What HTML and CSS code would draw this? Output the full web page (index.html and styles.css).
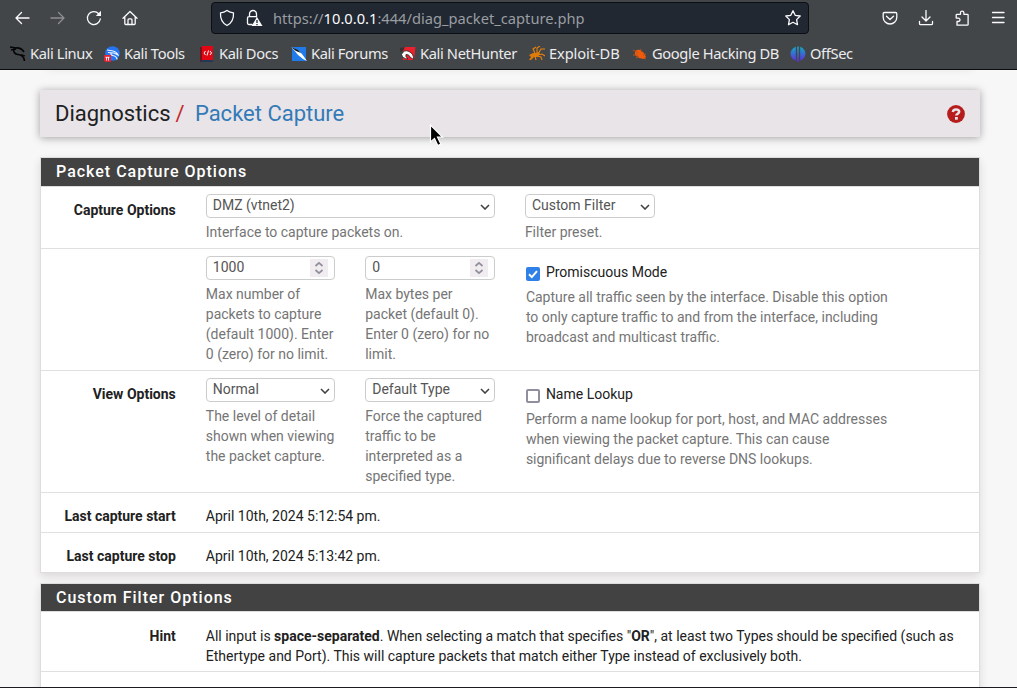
FILE: index.html
```html
<!DOCTYPE html>
<html lang="en">
<head>
<meta charset="utf-8">
<title>Diagnostics: Packet Capture</title>
<link rel="stylesheet" href="styles.css">
</head>
<body>
<svg class="defs" width="0" height="0">
  <symbol id="chev" viewBox="0 0 10 6"><path d="M1 1l4 4 4-4" fill="none" stroke="#444" stroke-width="1.6"/></symbol>
  <symbol id="spin" viewBox="0 0 18 18"><path d="M5.500 7L9 3.800 12.500 7M5.500 11L9 14.200 12.500 11" fill="none" stroke="#8f8f9d" stroke-width="1.700"/></symbol>
</svg>
<header class="browser">
  <div class="toolbar">
    <nav class="nav">
      <svg width="16" height="16" viewBox="0 0 16 16"><path d="M15 8H2M7.500 2.500L2 8l5.500 5.500"/></svg>
      <svg class="dim" width="16" height="16" viewBox="0 0 16 16"><path d="M1 8h13M8.500 2.500L14 8l-5.500 5.500"/></svg>
      <svg width="16" height="16" viewBox="0 0 16 16"><path d="M14.300 9A6.500 6.500 0 1 1 12.700 3.700"/><path class="fill" d="M15 .8V6H9.800z"/></svg>
      <svg width="16" height="16" viewBox="0 0 16 16"><path d="M1 8.200L8 1.500l7 6.700M2.800 7v6.500q0 1 1 1h8.400q1 0 1-1V7M6 14.300V10q0-1.200 1-1.200h2q1 0 1 1.200v4.300"/></svg>
    </nav>
    <div class="address">
      <svg width="16" height="18" viewBox="0 0 16 18"><path d="M8 1.500Q11 3.700 14.500 3.900C14.800 9 13 14 8 16.500 3 14 1.200 9 1.500 3.900Q5 3.700 8 1.500z"/></svg>
      <svg class="lock" width="17" height="18" viewBox="0 0 17 18"><path d="M3.500 7.500V5a3.500 3.500 0 0 1 7 0v3M6 15.500H3q-1.500 0-1.500-1.500V9Q1.500 7.700 3 7.700h7"/><path class="fill" d="M11 8l5.500 9h-11z"/><path d="M11 11v3M11 15v1.200" class="mark"/></svg>
      <span class="url">https://<b>10.0.0.1</b>:444/diag_packet_capture.php</span>
      <svg class="star" width="18" height="18" viewBox="0 0 18 18"><path d="M9 1.700l2.200 4.600 5 .7-3.600 3.600.9 5.100L9 13.300l-4.500 2.400.9-5.100L1.800 7l5-.7z"/></svg>
    </div>
    <div class="tools">
      <svg width="16" height="16" viewBox="0 0 16 16"><path d="M2.500 2.500h11q1.300 0 1.300 1.300v3.400a6.800 6.800 0 0 1-13.600 0V3.800q0-1.300 1.300-1.300zM4.500 6.200L8 9.500l3.500-3.300"/></svg>
      <svg width="16" height="16" viewBox="0 0 16 16"><path d="M8 .5v10M4 7l4 4 4-4M1.500 11.500v2q0 1.200 1.200 1.200h10.600q1.200 0 1.200-1.200v-2"/></svg>
      <svg width="16" height="16" viewBox="0 0 16 16"><path d="M3 15.200V11.500h1.300a1.700 1.700 0 0 0 0-3.400H2.200V5q0-.7.800-.7h3.500V2.800a1.700 1.700 0 0 1 3.400 0v1.500h3.400q.8 0 .8.800v9.300q0 .8-.8.800z"/></svg>
      <svg width="16" height="16" viewBox="0 0 16 16"><path d="M2.500 2.500h11.500M2.500 7.500h11.500M2.500 12.500h11.500"/></svg>
    </div>
  </div>
  <div class="bookmarks">
    <a><svg viewBox="0 0 16 16"><path d="M0 1l6 1q5-.5 8 4M1 4l5-1M4 2.500Q3 8 8 8.500q6 .5 6.500 6.500" fill="none" stroke="#050506" stroke-width="1.700"/><path d="M11 8.500l4 1.500" stroke="#050506" stroke-width="1.200"/></svg><span>Kali Linux</span></a>
    <a><svg viewBox="0 0 16 16"><circle cx="8.500" cy="7.500" r="7.300" fill="#2675f0"/><path d="M3 4l6 1q4 1 5 4l-4-2-6-.5M7 7q-.5 2 2 2.500 4 1 4 4" fill="none" stroke="#eaf2ff" stroke-width="1.200"/><path d="M0 9h7v7H1.500L0 14.500z" fill="#e02437"/><path d="M1.500 11.300h4M2.500 11v3.500M4.500 11v3.500" stroke="#fff" stroke-width=".9"/></svg><span>Kali Tools</span></a>
    <a><svg viewBox="0 0 16 16"><path d="M1 1h3v15H1z" fill="#7a1018"/><path d="M3 0h11v14H3z" fill="#e30613"/><path d="M2 14h12v2H2z" fill="#213957"/><path d="M6.500 5L5 7l1.500 2M11 5l1.500 2L11 9M9.500 4.500l-1.500 5" fill="none" stroke="#fff"/></svg><span>Kali Docs</span></a>
    <a><svg viewBox="0 0 16 16"><path d="M1 1h14v14H1z" fill="#1f7bea"/><path d="M0 1l8 4 3 3 5 7-4-2-5-4-4-5z" fill="#fff"/><path d="M0 1l7 3 3 3-5-2z" fill="#111"/></svg><span>Kali Forums</span></a>
    <a><svg viewBox="0 0 16 16"><path d="M3 1h12.500L14 14H3z" fill="#eb202d"/><path d="M0 2l5-1-2 4-3 1z" fill="#333"/><path d="M1.500 8.500Q4 3 9 5.500q5 2.500 4.500 8L10 11q-1-3-4-2.500-1 2 2 4.500-5 0-6.500-4.500z" fill="#fff" stroke="#222" stroke-width=".8"/></svg><span>Kali NetHunter</span></a>
    <a class="edb"><svg viewBox="0 0 16 16"><path d="M0 9l4-2 3 0 3-1 1 2-3 3-3 0-3 3H0l2-3z" fill="#dc7a0a"/><path d="M6 7L4 3l3-2M8 7l0-5 3-2M9 8l3-5 4 0M9 9l4-1 3 2M8 10l4 1 1 3M6 10l1 4" fill="none" stroke="#e98207" stroke-width="1.100"/></svg><span>Exploit-DB</span></a>
    <a><svg viewBox="0 0 16 16"><path d="M3 5q3-2 5-1l4 3 2 4-2 2-5-1-4-3z" fill="#f05a0a"/><path d="M1 4l5 3M1 9h5M4 12l3-2M8 3l2 3M14 8l-3 1M12 12l2 1" stroke="#b8521b" fill="none"/></svg><span>Google Hacking DB</span></a>
    <a><svg viewBox="0 0 16 16"><defs><linearGradient id="os" x2="0" y2="1"><stop stop-color="#12abc5"/><stop offset="1" stop-color="#6127e1"/></linearGradient></defs><path d="M5.800.8v13.800C-1.200 12-1.200 3.500 5.800.8zM7.200.5h1.600V16H7.200zM10.200.8v13.800c7-2.600 7-11.100 0-13.800z" fill="url(#os)"/></svg><span>OffSec</span></a>
  </div>
</header>
<main class="page">
  <div class="prev"></div>
  <div class="crumbs">
    <h1>Diagnostics <i>/</i> <a>Packet Capture</a></h1>
    <svg width="18" height="18" viewBox="0 0 18 18"><circle cx="9" cy="9" r="8.900" fill="#b71c1c"/><path d="M5.800 6.900Q6.300 4.500 9 4.500c2.200 0 3.200 1 3.200 2.300 0 2-2.900 1.800-2.900 3.800" fill="none" stroke="#e8e4e8" stroke-width="2.500"/><path d="M8 12h2.800v2.700H8z" fill="#e8e4e8"/></svg>
  </div>
  <section class="panel">
    <h2>Packet Capture Options</h2>
    <div class="row r1">
      <label>Capture Options</label>
      <div class="wide"><div class="field">DMZ (vtnet2)<svg class="chev"><use href="#chev"/></svg></div><p>Interface to capture packets on.</p></div>
      <div><div class="field">Custom Filter<svg class="chev"><use href="#chev"/></svg></div><p>Filter preset.</p></div>
    </div>
    <div class="row r2">
      <label></label>
      <div><div class="field">1000<svg class="spin"><use href="#spin"/></svg></div><p>Max number of<br>packets to capture<br>(default 1000). Enter<br>0 (zero) for no limit.</p></div>
      <div><div class="field">0<svg class="spin"><use href="#spin"/></svg></div><p>Max bytes per<br>packet (default 0).<br>Enter 0 (zero) for no<br>limit.</p></div>
      <div class="check"><div class="option"><span class="box on"><svg width="14" height="14" viewBox="0 0 14 14"><path d="M3 7.300l2.800 2.800L11 4.200" fill="none" stroke="#fff" stroke-width="2"/></svg></span><span>Promiscuous Mode</span></div><p>Capture all traffic seen by the interface. Disable this option<br>to only capture traffic to and from the interface, including<br>broadcast and multicast traffic.</p></div>
    </div>
    <div class="row r2">
      <label>View Options</label>
      <div><div class="field">Normal<svg class="chev"><use href="#chev"/></svg></div><p>The level of detail<br>shown when viewing<br>the packet capture.</p></div>
      <div><div class="field">Default Type<svg class="chev"><use href="#chev"/></svg></div><p>Force the captured<br>traffic to be<br>interpreted as a<br>specified type.</p></div>
      <div class="check"><div class="option"><span class="box"></span><span>Name Lookup</span></div><p>Perform a name lookup for port, host, and MAC addresses<br>when viewing the packet capture. This can cause<br>significant delays due to reverse DNS lookups.</p></div>
    </div>
    <div class="row r3"><label>Last capture start</label><div class="full">April 10th, 2024 5:12:54 pm.</div></div>
    <div class="row r3 last"><label>Last capture stop</label><div class="full">April 10th, 2024 5:13:42 pm.</div></div>
  </section>
  <section class="panel second">
    <h2>Custom Filter Options</h2>
    <div class="row r4"><label>Hint</label><div class="full">All input is <b>space-separated</b>. When selecting a match that specifies "<b>OR</b>", at least two Types should be specified (such as<br>Ethertype and Port). This will capture packets that match either Type instead of exclusively both.</div></div>
    <div class="row rest"></div>
  </section>
</main>
<svg class="cursor" width="16" height="24" viewBox="0 0 16 24"><path d="M1.500 1v17l4-3.600 3.300 7.100 3-1.400-3.300-6.900h5z" fill="#000" stroke="#fff" stroke-width="1.200"/></svg>
</body>
</html>
```

FILE: styles.css
```css
* { box-sizing: border-box; }
body { margin: 0; width: 1017px; height: 688px; overflow: hidden; display: flex; flex-direction: column; position: relative; background: #f7f7f7; color: #212121; font: 14px/20px Roboto, sans-serif; border-bottom: 1px solid #1c1b22; }
h1, h2, p { margin: 0; font-weight: 400; }
svg { flex: none; }
.defs { position: absolute; }

.browser { flex: none; height: 70px; background: #434649; border-bottom: 1px solid #0c0c0d; font-family: "Noto Sans", sans-serif; color: #ececee; }
.toolbar { height: 36px; display: flex; align-items: center; }
.toolbar svg { fill: none; stroke: #fbfbfe; stroke-width: 1.3; stroke-linejoin: round; stroke-linecap: round; }
.toolbar svg .fill { fill: #fbfbfe; stroke: none; }
.toolbar svg .mark { stroke: #20262f; stroke-linecap: butt; }
.toolbar svg.dim { opacity: .4; }
.nav { width: 210px; padding-left: 14px; display: flex; gap: 20px; }
.address { width: 598px; height: 32px; padding: 0 6px 0 7px; display: flex; align-items: center; background: #212832; border: 1px solid #0b0e13; border-radius: 4px; margin-left: 1px; }
.lock { margin-left: 11px; }
.url { margin-left: 10px; font-size: 14.67px; letter-spacing: .01px; color: #9a9da1; white-space: nowrap; }
.url b { font-weight: 400; color: #fbfbfe; }
.star { margin-left: auto; }
.tools { margin-left: 73px; display: flex; gap: 20px; }
.bookmarks { height: 33px; padding-left: 10px; display: grid; grid-template-columns: 94px 95px 92px 109px 129px 103px 158px 90px; align-items: center; }
.bookmarks a { display: flex; align-items: center; gap: 4px; font-size: 14.67px; letter-spacing: -.36px; white-space: nowrap; }
.bookmarks .edb { letter-spacing: -.1px; }
.bookmarks svg { width: 16px; height: 16px; margin-top: 2px; }

.page { flex: 1; padding: 0 37px 0 40px; clip-path: inset(0); }
.prev { height: 0; margin: 0 8px; width: 924px; box-shadow: 0 0 5px 1px rgba(120,90,110,.12); }
.crumbs { width: 940px; height: 47px; margin-top: 20px; padding: 0 15px; display: flex; align-items: center; justify-content: space-between; background: #e8e4e8; box-shadow: 0 1px 8px rgba(0,0,0,.35); }
.crumbs h1 { font-size: 22px; line-height: 26px; white-space: pre; }
.crumbs i { font-style: normal; color: #c62828; margin-left: -.5px; }
.crumbs a { color: #337ab7; margin-left: 4.8px; }

.panel { width: 940px; margin-top: 20px; background: #fff; border: 1px solid #ddd; box-shadow: 0 4px 8px rgba(70,40,50,.14); }
.panel h2 { height: 29px; padding-left: 15px; background: #424242; color: #fff; border-bottom: 1px solid #ddd; font-size: 16px; font-weight: 500; line-height: 27px; letter-spacing: 1px; }
.row { display: grid; grid-template-columns: 134.800px 129.400px 129.700px 363px; column-gap: 30px; padding-top: 7px; border-bottom: 1px solid #e2dfe2; }
.row:last-child { border-bottom: 0; }
.row label { text-align: right; font-weight: 700; padding-top: 6px; }
.r1 { height: 62px; }
.r1 .wide { grid-column: 2 / 4; }
.r1 > div:last-child { width: 130px; }
.r2 { height: 122px; }
.r3 { height: 40px; padding-top: 13px; }
.last { height: 39px; }
.r4 { height: 60px; padding-top: 14px; }
.r3 label, .r4 label { padding-top: 0; }
.full { grid-column: 2 / 5; white-space: nowrap; }
.row p { color: #757575; white-space: nowrap; margin-top: 4px; }
.field { height: 24px; padding: 0 4px 2px 6px; display: flex; align-items: center; justify-content: space-between; line-height: 20px; color: #555; border: 1px solid #ccc; border-radius: 4px; background: #fff; }
.chev { width: 10px; height: 6px; margin-top: 3px; }
.spin { width: 18px; height: 18px; background: #f0ecf0; margin: 2px 2px 0 0; }
.check { padding-left: 1px; }
.option { display: flex; gap: 6px; margin-top: 6px; align-items: flex-start; height: 20px; }
.box { width: 14px; height: 14px; margin-top: 5px; border: 2px solid #8f8f9d; border-radius: 2px; display: flex; }
.box.on { border: 0; background: #2f80e7; }
.check p { margin-top: 5px; }
.second { margin-top: 10px; }
.rest { height: 30px; }
.second h2 { height: 28px; }
.cursor { position: absolute; left: 429px; top: 124px; }
```
